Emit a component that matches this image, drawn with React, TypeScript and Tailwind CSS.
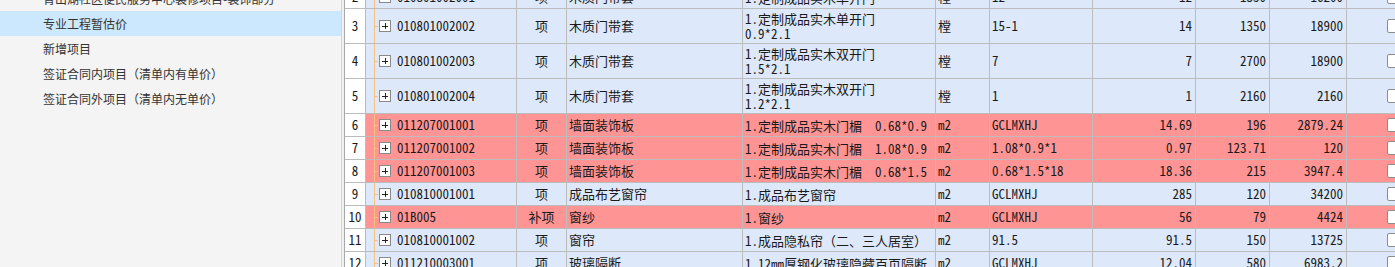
import React from "react";

type Row = {
  no: number;
  code: string;
  kind: string;
  name: string;
  desc: string[];
  unit: string;
  expr: string;
  qty: string;
  price: string;
  total: string;
  pink?: boolean;
};

const rows: Row[] = [
  { no: 2, code: "010801002001", kind: "项", name: "木质门带套", desc: ["1.定制成品实木单开门"], unit: "樘", expr: "12", qty: "12", price: "1350", total: "16200" },
  { no: 3, code: "010801002002", kind: "项", name: "木质门带套", desc: ["1.定制成品实木单开门", "0.9*2.1"], unit: "樘", expr: "15-1", qty: "14", price: "1350", total: "18900" },
  { no: 4, code: "010801002003", kind: "项", name: "木质门带套", desc: ["1.定制成品实木双开门", "1.5*2.1"], unit: "樘", expr: "7", qty: "7", price: "2700", total: "18900" },
  { no: 5, code: "010801002004", kind: "项", name: "木质门带套", desc: ["1.定制成品实木双开门", "1.2*2.1"], unit: "樘", expr: "1", qty: "1", price: "2160", total: "2160" },
  { no: 6, code: "011207001001", kind: "项", name: "墙面装饰板", desc: ["1.定制成品实木门楣  0.68*0.9"], unit: "m2", expr: "GCLMXHJ", qty: "14.69", price: "196", total: "2879.24", pink: true },
  { no: 7, code: "011207001002", kind: "项", name: "墙面装饰板", desc: ["1.定制成品实木门楣  1.08*0.9"], unit: "m2", expr: "1.08*0.9*1", qty: "0.97", price: "123.71", total: "120", pink: true },
  { no: 8, code: "011207001003", kind: "项", name: "墙面装饰板", desc: ["1.定制成品实木门楣  0.68*1.5"], unit: "m2", expr: "0.68*1.5*18", qty: "18.36", price: "215", total: "3947.4", pink: true },
  { no: 9, code: "010810001001", kind: "项", name: "成品布艺窗帘", desc: ["1.成品布艺窗帘"], unit: "m2", expr: "GCLMXHJ", qty: "285", price: "120", total: "34200" },
  { no: 10, code: "01B005", kind: "补项", name: "窗纱", desc: ["1.窗纱"], unit: "m2", expr: "GCLMXHJ", qty: "56", price: "79", total: "4424", pink: true },
  { no: 11, code: "010810001002", kind: "项", name: "窗帘", desc: ["1.成品隐私帘（二、三人居室）"], unit: "m2", expr: "91.5", qty: "91.5", price: "150", total: "13725" },
  { no: 12, code: "011210003001", kind: "项", name: "玻璃隔断", desc: ["1.12mm厚钢化玻璃隐藏百页隔断"], unit: "m2", expr: "GCLMXHJ", qty: "12.04", price: "580", total: "6983.2" },
];

const menu = [
  "青山湖社区便民服务中心装修项目-装饰部分",
  "专业工程暂估价",
  "新增项目",
  "签证合同内项目（清单内有单价）",
  "签证合同外项目（清单内无单价）",
];

const Sidebar = () => {
  return (
    <div className="w-[342px] shrink-0 h-full bg-[#f4f4f4] border-r border-[#d4d4d4] overflow-hidden">
      <div className="-mt-[14px] flex flex-col">
        {menu.map((m, i) => (
          <div
            key={m}
            className={
              i === 1
                ? "h-[25px] flex items-center pl-[43px] text-[12px] text-[#333] bg-[#cce8ff] whitespace-nowrap"
                : "h-[25px] flex items-center pl-[43px] text-[12px] text-[#333] whitespace-nowrap"
            }
          >
            {m}
          </div>
        ))}
      </div>
    </div>
  );
};

const PlusBox = () => (
  <div className="relative w-[12px] h-[12px] border border-[#8a8a8a] bg-white shrink-0">
    <div className="absolute left-[2px] top-[4.5px] w-[6px] h-px bg-[#222]" />
    <div className="absolute left-[4.5px] top-[2px] w-px h-[6px] bg-[#222]" />
  </div>
);

const TableRow = ({ r }: { r: Row }) => {
  const bg = r.pink ? "bg-[#ff9494]" : "bg-[#dde9fb]";
  const h = r.desc.length > 1 ? "h-[34px]" : "h-[22px]";
  const cell = `${h} ${bg} flex items-center overflow-hidden whitespace-nowrap`;
  return (
    <>
      <div className={`${h} bg-white flex items-center justify-center`}>{r.no}</div>
      <div className={`${cell} relative pl-[12px]`}>
        <div className="absolute left-[8px] top-0 bottom-0 w-px bg-[#f7c37c]" />
        <div className="w-[1px] h-px" />
        <div className="absolute left-[8px] w-[4px] h-px bg-[#f7c37c]" />
        <PlusBox />
        <span className="ml-[6px]">{r.code}</span>
      </div>
      <div className={`${cell} justify-center`}>{r.kind}</div>
      <div className={`${cell} pl-[2px]`}>{r.name}</div>
      <div className={`${cell} pl-[2px] flex-col !items-start justify-center leading-[15px]`}>
        {r.desc.map((d) => (
          <span key={d} className="whitespace-pre">{d}</span>
        ))}
      </div>
      <div className={`${cell} pl-[2px]`}>{r.unit}</div>
      <div className={`${cell} pl-[2px]`}>{r.expr}</div>
      <div className={`${cell} justify-end pr-[3px]`}>{r.qty}</div>
      <div className={`${cell} justify-end pr-[3px]`}>{r.price}</div>
      <div className={`${cell} justify-end pr-[3px]`}>{r.total}</div>
      <div className={`${cell} pl-[40px]`}>
        <div className="w-[14px] h-[14px] bg-white border border-[#8c8c8c] rounded-[2px] shrink-0" />
      </div>
    </>
  );
};

export default function App() {
  return (
    <div className="w-[1395px] h-[267px] flex overflow-hidden bg-[#f0f0f0] font-['Noto_Sans_CJK_SC',sans-serif]">
      <Sidebar />
      <div className="w-[2px] shrink-0 bg-[#f0f0f0]" />
      <div className="flex-1 overflow-hidden">
        <div
          className="-mt-[14px] grid grid-cols-[20px_150px_49px_175px_192px_53px_102px_102px_73px_76px_60px] gap-px bg-[#bcbcbc] border-l border-[#a8a8a8] w-max text-[13px] text-[#1a1a1a] font-['Noto_Sans_Mono_CJK_SC','Liberation_Mono','Noto_Sans_CJK_SC',monospace]"
        >
          {rows.map((r) => (
            <TableRow key={r.no} r={r} />
          ))}
        </div>
      </div>
    </div>
  );
}
